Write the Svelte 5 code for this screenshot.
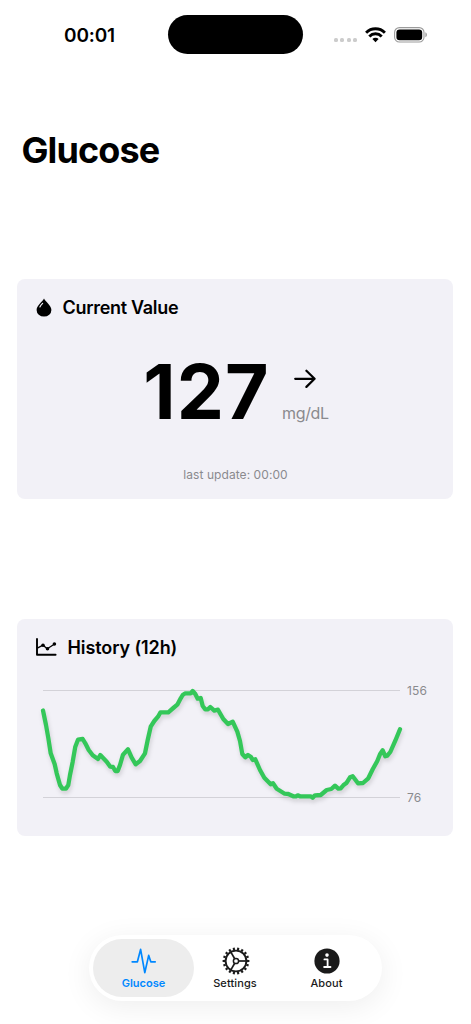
<script>
  let active = $state('Glucose');

  const current = { value: 127, unit: 'mg/dL', updated: '00:00' };
  const range = { high: 156, low: 76 };
  const tabs = ['Glucose', 'Settings', 'About'];
  const spokes = [0, 120, 240];
  const teeth = Array.from({ length: 18 }, (_, i) => i * 20);

  // chart points, origin is the left end of the upper grid line
  const points = [
    [0, 20], [3, 34.5], [5.3, 47.5], [7.7, 62.8], [11.7, 73.8], [13.7, 82.8], [17, 94.5], [19.3, 98.2],
    [23, 98.2], [25.3, 94.5], [27, 84.5], [29.7, 71.2], [32.3, 56.2], [35, 49.2], [39.7, 48.5], [42.3, 52.8],
    [45.7, 59.5], [49.7, 64.8], [55, 68.5], [57.3, 64.5], [63.7, 71.2], [67.3, 76.2], [70, 76.5], [72.3, 80.5],
    [74.7, 80.5], [77, 74.5], [80, 64.2], [85, 58.8], [88.7, 67.2], [92.7, 73.8], [97, 70.5], [102, 62.8],
    [104.7, 49.5], [107.7, 36.2], [111.3, 30.5], [115, 26.2], [117.5, 21.8], [125.3, 21.8], [130.3, 17.5],
    [134.3, 14.2], [137.7, 7.8], [139.7, 4.5], [142.3, 2.8], [147.7, 2.8], [149.7, 0.5], [152.3, 3.5],
    [154.7, 8.2], [157.7, 7.5], [159.7, 15.5], [162.3, 18.8], [165, 18.8], [167.3, 16.5], [171.3, 20.2],
    [175, 19.2], [180.3, 28.5], [185, 33.5], [189.7, 31.2], [194.3, 41.2], [197, 50.5], [199.3, 63.5],
    [202.3, 66.8], [205, 64.5], [207.7, 66.2], [209.7, 69.5], [212.3, 68.8], [217, 79.5], [221.3, 87.2],
    [227.7, 93.8], [230, 92.8], [233.7, 98.2], [241.7, 103.2], [245.3, 103.5], [250.3, 105.8], [253, 105.8],
    [254.7, 104.8], [257, 105.8], [267.7, 105.8], [269.7, 107.2], [272, 104.8], [277.7, 104.5], [283.7, 99.5],
    [288.3, 98.5], [292, 95.2], [295.3, 98.2], [297.7, 97.8], [300.3, 94.8], [303.7, 92.2], [307, 86.8],
    [309.7, 85.8], [315, 92.8], [320, 92.5], [325.3, 87.8], [329.7, 78.8], [334.3, 70.5], [337, 63.8],
    [339.7, 59.8], [342.3, 65.8], [344.3, 65.2], [347.3, 61.5], [352.3, 50.2], [357, 38.8]
  ];
  const line = points.map((p) => p.join(',')).join(' ');
</script>

<div class="screen">
  <header class="status">
    <span class="time">00:01</span>
    <span class="island"></span>
    <span class="indicators">
      <span class="dots"><i></i><i></i><i></i><i></i></span>
      <svg class="wifi" width="21" height="16" viewBox="0 0 21 16">
        <g fill="none" stroke="#000" stroke-width="2.9">
          <path d="M1.1 5.7a13.3 13.3 0 0 1 18.8 0" />
          <path d="M4.3 9.4a8.7 8.7 0 0 1 12.4 0" />
        </g>
        <path d="M7.4 12.1a4.4 4.4 0 0 1 6.2 0l-3.1 3.2z" />
      </svg>
      <svg class="battery" width="34" height="16" viewBox="0 0 34 16">
        <rect x=".6" y=".6" width="29.4" height="14.4" rx="4.8" fill="none" stroke="#9b9b9b" stroke-width="1.1" />
        <rect x="2.4" y="2.4" width="25.8" height="10.8" rx="3.2" />
        <path d="M31.4 5.3c2 .7 2 4.3 0 5z" fill="#9b9b9b" />
      </svg>
    </span>
  </header>

  <h1>Glucose</h1>

  <section class="card current">
    <h2>
      <svg class="drop" width="16" height="19" viewBox="0 0 16 19">
        <path d="M8 .5C9.4 3.4 15.4 7.6 15.4 11.9A7.4 6.7 0 0 1 8 18.6A7.4 6.7 0 0 1 .6 11.9C.6 7.6 6.6 3.4 8 .5z" />
        <path d="M6.6 5.4C5.4 6.6 4.5 7.6 3.9 9" fill="none" stroke="#f2f1f7" stroke-width="1.2" stroke-linecap="round" />
      </svg>
      Current Value
    </h2>
    <div class="reading">
      <strong>{current.value}</strong>
      <div class="trend">
        <svg width="22" height="20" viewBox="0 0 22 20" fill="none" stroke="#000" stroke-width="2.2" stroke-linecap="round" stroke-linejoin="round">
          <path d="M1.2 9.8h19.4M12.4 1.7l8.2 8.1-8.2 8.1" />
        </svg>
        <span>{current.unit}</span>
      </div>
    </div>
    <p>last update: {current.updated}</p>
  </section>

  <section class="card history">
    <h2>
      <svg class="graph" width="21" height="18" viewBox="0 0 21 18" fill="none" stroke="#000" stroke-linecap="round" stroke-linejoin="round">
        <path d="M1 1v15.8h18.6" stroke-width="1.9" />
        <path d="M1.8 9.8 7 7.2l4.3 3.5L18.6 6" stroke-width="1.3" />
        <g fill="#000" stroke="none">
          <circle cx="7" cy="7.2" r="1.8" />
          <circle cx="11.5" cy="10.8" r="1.8" />
          <circle cx="18.4" cy="6" r="1.8" />
        </g>
      </svg>
      History (12h)
    </h2>
    <div class="chart">
      <svg width="357" height="108" viewBox="0 0 357 108">
        <path d="M0 .5h357M0 107.5h357" stroke="#d3d2d8" />
        <polyline class="curve" points={line} />
      </svg>
      <div class="scale">
        <span>{range.high}</span>
        <span>{range.low}</span>
      </div>
    </div>
  </section>

  <nav>
    {#each tabs as tab}
      <button class:active={active === tab} onclick={() => (active = tab)}>
        {#if tab === 'Glucose'}
          <svg width="28" height="28" viewBox="0 0 28 28" fill="none" stroke="currentColor" stroke-width="1.7" stroke-linecap="round" stroke-linejoin="round">
            <path d="M2.2 14.8h5.2L10.6 2.4 14.8 25.6l3.9-17.2 2.1 6.4h4.4" />
          </svg>
        {:else if tab === 'Settings'}
          <svg class="gear" width="28" height="28" viewBox="-14 -14 28 28" fill="none" stroke="currentColor">
            <circle r="10.4" stroke-width="1.9" />
            <circle r="2.6" stroke-width="1.5" />
            {#each teeth as angle}
              <path d="M11 0h2.4" stroke-width="2.1" transform="rotate({angle})" />
            {/each}
            {#each spokes as angle}
              <path d="M2.6 0h8" stroke-width="1.7" transform="rotate({angle})" />
            {/each}
          </svg>
        {:else}
          <svg width="28" height="28" viewBox="-14 -14 28 28">
            <circle r="12.6" fill="currentColor" />
            <circle cy="-5.9" r="1.8" fill="#fff" />
            <path d="M-2.6-1.6H.6V6M-2.9 6H3.5" fill="none" stroke="#fff" stroke-width="1.8" stroke-linecap="round" stroke-linejoin="round" />
          </svg>
        {/if}
        <span>{tab}</span>
      </button>
    {/each}
  </nav>
</div>

<style>
  :global(body) {
    margin: 0;
    background: #fff;
  }

  .screen {
    display: flex;
    flex-direction: column;
    box-sizing: border-box;
    width: 471px;
    height: 1024px;
    overflow: hidden;
    background: #fff;
    color: #000;
    font-family: Inter, sans-serif;
  }

  .status {
    display: grid;
    grid-template-columns: 168px 135px 1fr;
    align-items: center;
    height: 39px;
    padding-top: 15px;
  }

  .time {
    padding: 2px 0 0 64px;
    font-size: 19px;
    font-weight: 600;
    letter-spacing: -0.15px;
  }

  .island {
    height: 39px;
    border-radius: 20px;
    background: #000;
  }

  .indicators {
    display: flex;
    align-items: center;
    padding-left: 31px;
  }

  .dots {
    display: flex;
    gap: 2.4px;
    margin: 11px 8px 0 0;
  }

  .dots i {
    width: 4px;
    height: 4px;
    border-radius: 1.6px;
    background: #ccc;
  }

  .battery {
    margin-left: 8px;
  }

  h1 {
    margin: 75px 0 0 21.5px;
    font-size: 36px;
    line-height: 42px;
    font-weight: 700;
    letter-spacing: -0.9px;
  }

  .card {
    box-sizing: border-box;
    flex: none;
    margin: 0 18px 0 17px;
    border-radius: 8px;
    background: #f2f1f7;
  }

  .current {
    height: 220px;
    margin-top: 108px;
  }

  .history {
    height: 217px;
    margin-top: 120px;
  }

  h2 {
    display: flex;
    align-items: center;
    height: 24px;
    margin: 0;
    padding: 16px 0 0 19px;
    font-size: 18px;
    font-weight: 600;
    letter-spacing: -0.3px;
  }

  .history h2 {
    letter-spacing: -0.1px;
  }

  .drop {
    margin-right: 10.5px;
  }

  .graph {
    margin-right: 10.5px;
  }

  .reading {
    display: flex;
    justify-content: center;
    gap: 12px;
    height: 76px;
    margin-top: 34px;
    padding-left: 2px;
  }

  .reading strong {
    padding-top: 1px;
    font-size: 75px;
    line-height: 76px;
    font-weight: 700;
    letter-spacing: 1.2px;
  }

  .trend {
    display: flex;
    flex-direction: column;
    align-items: center;
    padding-top: 16px;
  }

  .trend span {
    margin-top: 13.5px;
    font-size: 16px;
    line-height: 20px;
    letter-spacing: -0.3px;
    color: #8a8a8e;
  }

  p {
    margin: 38px 0 0;
    padding-left: 1px;
    font-size: 12px;
    line-height: 16px;
    text-align: center;
    letter-spacing: 0.07px;
    color: #8a8a8e;
  }

  .chart {
    display: flex;
    gap: 7px;
    margin: 31px 0 0 26px;
  }

  .chart svg {
    overflow: visible;
  }

  .curve {
    fill: none;
    stroke: #34c759;
    stroke-width: 4.3;
    stroke-linecap: round;
    stroke-linejoin: round;
    transform: translateY(0.5px);
    filter: drop-shadow(1px 3px 2px rgba(0, 0, 0, 0.14));
  }

  .scale {
    display: flex;
    flex-direction: column;
    justify-content: space-between;
    margin: -7px 0;
    font-size: 12px;
    line-height: 15px;
    letter-spacing: 0.1px;
    color: #8a8a8e;
  }

  nav {
    display: flex;
    box-sizing: border-box;
    flex: none;
    width: 293px;
    height: 66px;
    margin: 99px 0 0 89px;
    padding: 4px;
    border-radius: 33px;
    background: #fff;
    box-shadow: 0 6px 30px rgba(0, 0, 0, 0.07);
  }

  button {
    display: flex;
    flex: none;
    flex-direction: column;
    align-items: center;
    width: 101px;
    height: 58px;
    padding: 8px 0 0;
    border: 0;
    border-radius: 29px;
    background: none;
    color: #1a1a1a;
    font-family: inherit;
    font-size: 11px;
    font-weight: 500;
    line-height: 14px;
    letter-spacing: 0.1px;
  }

  button + button {
    margin-left: -9.5px;
  }

  button.active {
    background: #ededed;
    color: #0088ff;
    font-weight: 600;
    letter-spacing: 0;
  }

  .gear {
    margin-left: 2px;
  }

  button span {
    margin-top: 1px;
  }
</style>
